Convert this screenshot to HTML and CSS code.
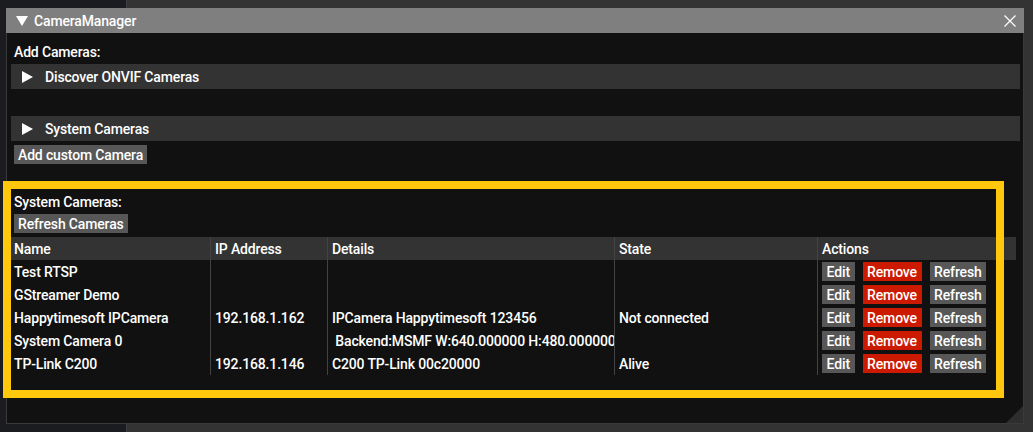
FILE: index.html
```html
<!DOCTYPE html>
<html>
<head>
<meta charset="utf-8">
<link rel="stylesheet" href="styles.css">
</head>
<body>
<div class="desktop"><div class="side"></div><div class="main"></div></div>
<div class="window">
  <div class="titlebar">
    <svg class="tri-down" width="12" height="10" viewBox="0 0 12 10"><polygon points="0,0 12,0 6,10" fill="#fff"/></svg>
    <span class="title">CameraManager</span>
    <svg class="close" width="14" height="14" viewBox="0 0 14 14"><path d="M1.5 1.5 L12.5 12.5 M12.5 1.5 L1.5 12.5" stroke="#fff" stroke-width="1.2" fill="none"/></svg>
  </div>
  <div class="content">
    <div class="text">Add Cameras:</div>
    <div class="chead chead-first">
      <svg class="tri-right" width="11" height="12" viewBox="0 0 11 12"><polygon points="0,0 11,6 0,12" fill="#fff"/></svg>
      <span>Discover ONVIF Cameras</span>
    </div>
    <div class="chead chead-second">
      <svg class="tri-right" width="11" height="12" viewBox="0 0 11 12"><polygon points="0,0 11,6 0,12" fill="#fff"/></svg>
      <span>System Cameras</span>
    </div>
    <div class="btnrow"><span class="btn">Add custom Camera</span></div>
    <div class="text text-sys">System Cameras:</div>
    <div class="btnrow"><span class="btn">Refresh Cameras</span></div>
    <div class="table">
      <div class="th">Name</div><div class="th">IP Address</div><div class="th">Details</div><div class="th">State</div><div class="th">Actions</div>

      <div class="td">Test RTSP</div><div class="td"></div><div class="td"></div><div class="td"></div>
      <div class="td actions"><span class="btn">Edit</span><span class="btn red">Remove</span><span class="btn">Refresh</span></div>

      <div class="td">GStreamer Demo</div><div class="td"></div><div class="td"></div><div class="td"></div>
      <div class="td actions"><span class="btn">Edit</span><span class="btn red">Remove</span><span class="btn">Refresh</span></div>

      <div class="td">Happytimesoft IPCamera</div><div class="td">192.168.1.162</div><div class="td">IPCamera Happytimesoft 123456</div><div class="td">Not connected</div>
      <div class="td actions"><span class="btn">Edit</span><span class="btn red">Remove</span><span class="btn">Refresh</span></div>

      <div class="td">System Camera 0</div><div class="td"></div><div class="td">&nbsp;Backend:MSMF W:640.000000 H:480.000000</div><div class="td"></div>
      <div class="td actions"><span class="btn">Edit</span><span class="btn red">Remove</span><span class="btn">Refresh</span></div>

      <div class="td">TP-Link C200</div><div class="td">192.168.1.146</div><div class="td">C200 TP-Link 00c20000</div><div class="td">Alive</div>
      <div class="td actions"><span class="btn">Edit</span><span class="btn red">Remove</span><span class="btn">Refresh</span></div>
    </div>
  </div>
  <div class="grip"></div>
</div>
<div class="highlight"></div>
</body>
</html>
```

FILE: styles.css
```css
html, body {
  margin: 0;
  padding: 0;
  width: 100%;
  height: 100%;
  overflow: hidden;
  font-family: Roboto, "Liberation Sans", sans-serif;
  font-weight: 500;
  font-size: 14px;
  letter-spacing: -0.15px;
  color: #ffffff;
}

.desktop {
  display: flex;
  height: 100%;
}

.side {
  width: 126px;
  background: #1b1c20;
  border-right: 1px solid #3c3c44;
}

.main {
  flex: 1;
  background: #333333;
}

.window {
  position: absolute;
  left: 6px;
  top: 8px;
  width: 1018px;
  height: 416px;
  box-sizing: border-box;
  background: #111111;
  border: 1px solid #3a3a3e;
  border-top: none;
}

.titlebar {
  display: flex;
  align-items: center;
  height: 25px;
  margin: 0 -1px;
  background: #7f7f7f;
}

.tri-down {
  margin-left: 10px;
  flex: none;
}

.title {
  margin-left: 6px;
  line-height: 23px;
  padding-top: 2px;
}

.close {
  margin-left: auto;
  margin-right: 7px;
  flex: none;
}

.content {
  padding: 10px 6px 0 7px;
}

.text {
  height: 19px;
  line-height: 19px;
}

.text-sys {
  margin-top: 29px;
}

.chead {
  display: flex;
  align-items: center;
  height: 25px;
  margin: 2px -3px 0 -3px;
  background: #333333;
}

.chead span {
  line-height: 23px;
  padding-top: 2px;
}

.chead-second {
  margin-top: 27px;
}

.tri-right {
  margin-left: 11px;
  margin-right: 12px;
  flex: none;
}

.btnrow {
  display: flex;
  margin-top: 4px;
}

.text-sys + .btnrow {
  margin-top: 2px;
}

.btn {
  display: inline-block;
  height: 19px;
  box-sizing: border-box;
  line-height: 18px;
  padding: 1px 4px 0 4px;
  background: #575757;
  white-space: nowrap;
}

.btn.red {
  background: #cc1a00;
}

.table {
  display: grid;
  grid-template-columns: 199px 117px 287px 203px 199px;
  grid-auto-rows: 23px;
  margin: 4px 0 0 -3px;
}

.th, .td {
  line-height: 22px;
  padding-top: 1px;
  padding-left: 4px;
  white-space: nowrap;
  overflow: hidden;
  border-left: 1px solid #434343;
}

.th:nth-child(5n+1), .td:nth-child(5n+1) {
  border-left-color: transparent;
  padding-left: 2px;
}

.th {
  background: #333333;
  padding-top: 2px;
  line-height: 21px;
}

.td.actions {
  display: flex;
  align-items: center;
  gap: 8px;
  padding-top: 0;
}

.td.actions .btn {
  padding-left: 4.6px;
  padding-right: 4.6px;
}

.grip {
  position: absolute;
  right: 0;
  bottom: 0;
  width: 17px;
  height: 17px;
  background: #2e2e2e;
  clip-path: polygon(100% 0, 100% 100%, 0 100%);
}

.highlight {
  position: absolute;
  left: 3px;
  top: 181px;
  width: 1001px;
  height: 217px;
  box-sizing: border-box;
  border: 8px solid #ffc80d;
}
```
